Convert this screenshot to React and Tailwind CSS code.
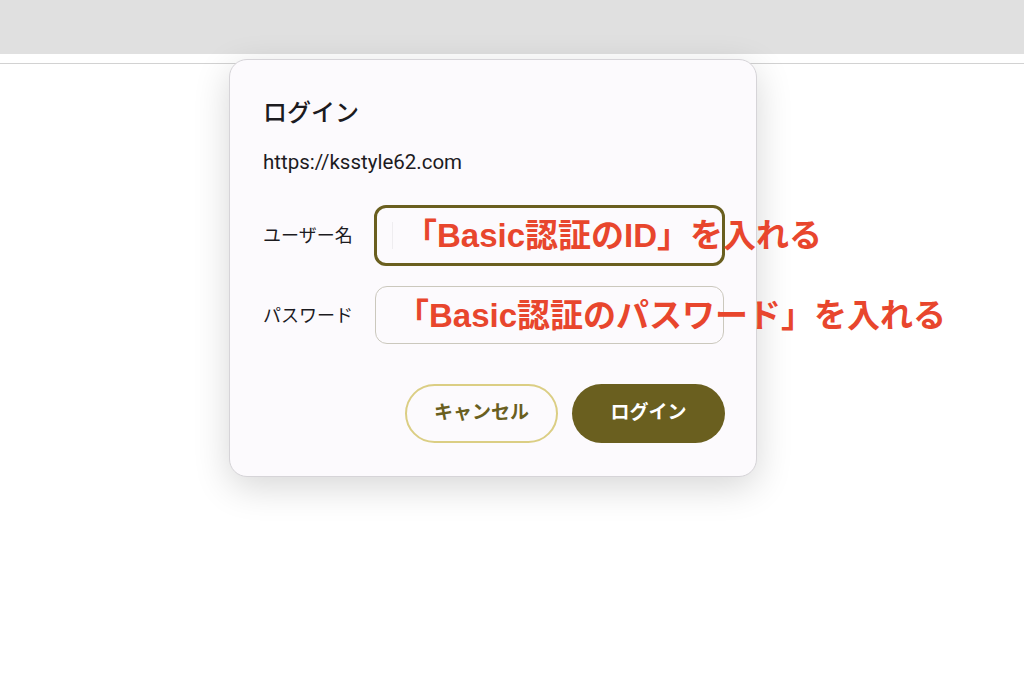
import React from 'react';

const jp = { fontFamily: 'Roboto, "Noto Sans CJK JP", sans-serif' };
const note = { fontFamily: '"Liberation Sans", "Noto Sans CJK JP", sans-serif' };

const LoginDialog = () => {
    return (
        <div className="absolute left-[229px] top-[59px] w-[528px] rounded-[18px] border border-[#d6d4d8] bg-[#fcfafd] pl-[33px] pr-[31px] pt-[37px] pb-[33px] shadow-[0_10px_36px_rgba(0,0,0,0.16)]" style={jp}>
            <h2 className="text-[24px] leading-[32px] font-medium text-[#1c1b1f]">ログイン</h2>
            <p className="mt-[19px] text-[20.5px] leading-[28px] text-[#1c1b1f]">https://ksstyle62.com</p>

            {/* Fields */}
            <div className="mt-[29px] flex items-center">
                <label className="w-[111px] text-[18px] text-[#1c1b1f]">ユーザー名</label>
                <div className="relative h-[61px] w-[351px] rounded-[12px] border-[3px] border-[#6a5f1f]">
                    <span className="absolute left-[15px] top-[14px] h-[27px] w-px bg-[#efedf0]"></span>
                </div>
            </div>
            <div className="mt-[20px] flex items-center">
                <label className="w-[112px] text-[18px] text-[#1c1b1f]">パスワード</label>
                <div className="h-[58px] w-[349px] rounded-[12px] border border-[#cbc8bd]"></div>
            </div>

            {/* Actions */}
            <div className="mt-[40px] flex justify-end gap-[14px]">
                <button className="h-[59px] w-[153px] rounded-full border-2 border-[#dbce84] text-[19px] font-bold text-[#6a5f1f]">キャンセル</button>
                <button className="h-[59px] w-[153px] rounded-full bg-[#6a5f1f] text-[19px] font-bold text-white">ログイン</button>
            </div>
        </div>
    );
};

const App = () => {
    return (
        <div className="relative h-[677px] w-[1024px] overflow-hidden bg-white">
            <div className="h-[54px] bg-[#e0e0e0]"></div>
            <div className="h-[10px] border-b border-[#d2d2d2] bg-white"></div>

            <LoginDialog />

            {/* Annotations */}
            <p className="absolute left-[404px] top-[215px] whitespace-nowrap text-[33px] leading-[42px] font-bold text-[#e8462d]" style={note}>「Basic認証のID」を入れる</p>
            <p className="absolute left-[396px] top-[295px] whitespace-nowrap text-[33px] leading-[42px] font-bold text-[#e8462d]" style={note}>「Basic認証のパスワード」を入れる</p>
        </div>
    );
};

export default App;
